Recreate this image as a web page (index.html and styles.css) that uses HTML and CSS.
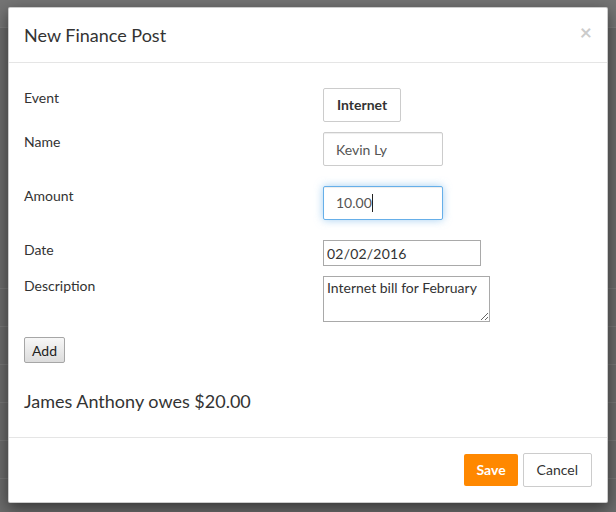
FILE: index.html
```html
<!DOCTYPE html>
<html>
<head>
<meta charset="utf-8">
<title>New Finance Post</title>
<link rel="stylesheet" href="styles.css">
</head>
<body>
<div class="page">
  <div class="topbar"></div>
  <div class="table">
    <div class="trow tall"></div>
    <div class="trow"></div>
    <div class="trow"></div>
    <div class="trow"></div>
    <div class="trow"></div>
    <div class="trow"></div>
  </div>
</div>

<div class="modal">
  <div class="modal-header">
    <button class="close" type="button">&times;</button>
    <h4 class="modal-title">New Finance Post</h4>
  </div>
  <div class="modal-body">
    <form class="form">
      <div class="form-row gap10">
        <label class="label">Event</label>
        <div class="control"><button type="button" class="btn btn-default btn-bold">Internet</button></div>
      </div>
      <div class="form-row gap20">
        <label class="label">Name</label>
        <div class="control"><input class="text-input" type="text" value="Kevin Ly"></div>
      </div>
      <div class="form-row gap20">
        <label class="label">Amount</label>
        <div class="control"><div class="text-input focused">10.00<span class="caret"></span></div></div>
      </div>
      <div class="form-row gap10">
        <label class="label">Date</label>
        <div class="control"><input class="date-input" type="text" value="02/02/2016"></div>
      </div>
      <div class="form-row gap15">
        <label class="label">Description</label>
        <div class="control"><textarea class="textarea">Internet bill for February</textarea></div>
      </div>
      <div class="add-row">
        <button type="button" class="native-btn">Add</button>
      </div>
    </form>
    <h4 class="owes">James Anthony owes $20.00</h4>
  </div>
  <div class="modal-footer">
    <button type="button" class="btn btn-save">Save</button>
    <button type="button" class="btn btn-default btn-wide">Cancel</button>
  </div>
</div>
</body>
</html>
```

FILE: styles.css
```css
html, body {
  margin: 0;
  padding: 0;
}

body {
  width: 616px;
  height: 512px;
  overflow: hidden;
  position: relative;
  background: #6b6b6b;
  font-family: Lato, "Helvetica Neue", Arial, sans-serif;
  font-size: 14px;
  line-height: 1.42857;
  color: #333;
}

/* dimmed page underneath */
.page {
  width: 100%;
  height: 100%;
}

.topbar {
  height: 27px;
  background: #747474;
  border-bottom: 1px solid #7c7c7c;
}

.table {
  padding-top: 260px;
}

.trow {
  height: 37px;
  border-top: 1px solid #777;
}

/* modal */
.modal {
  position: absolute;
  left: 8px;
  top: 7px;
  width: 600px;
  box-sizing: border-box;
  background: #fff;
  border: 1px solid rgba(0, 0, 0, 0.2);
  border-radius: 2px;
  box-shadow: 0 5px 15px rgba(0, 0, 0, 0.5);
}

.modal-header {
  padding: 15px;
  border-bottom: 1px solid #e5e5e5;
}

.modal-title {
  margin: 0;
  font-size: 18px;
  font-weight: 400;
  line-height: 24px;
  color: #333;
}

.close {
  float: right;
  margin-top: -2px;
  padding: 0;
  border: 0;
  background: transparent;
  font-family: inherit;
  font-size: 21px;
  font-weight: 700;
  line-height: 1;
  color: #000;
  opacity: 0.2;
  cursor: pointer;
}

.modal-body {
  padding: 25px 15px 10px;
}

.form {
  margin: 0;
}

.form-row {
  display: grid;
  grid-template-columns: 299px 1fr;
  align-items: start;
}

.gap10 { margin-bottom: 10px; }
.gap15 { margin-bottom: 15px; }
.gap20 { margin-bottom: 20px; }

.label {
  display: block;
  font-weight: 400;
  line-height: 20px;
  color: #333;
}

.control {
  display: flex;
}

.btn {
  display: inline-block;
  box-sizing: border-box;
  height: 34px;
  padding: 6px 12px;
  font-family: inherit;
  font-size: 14px;
  line-height: 20px;
  border: 1px solid transparent;
  border-radius: 2px;
  vertical-align: middle;
  cursor: pointer;
}

.btn-default {
  background: #fff;
  border-color: #ccc;
  color: #333;
}

.btn-bold {
  font-weight: 700;
  padding: 6px 13px;
}

.btn-wide {
  padding: 6px 13px;
}

.btn-save {
  height: 32px;
  background: #ff8800;
  border: 0;
  color: #fff;
  font-weight: 700;
}

.text-input {
  box-sizing: border-box;
  width: 120px;
  height: 34px;
  padding: 6px 12px;
  font-family: inherit;
  font-size: 14px;
  line-height: 20px;
  color: #555;
  background: #fff;
  border: 1px solid #ccc;
  border-radius: 2px;
  box-shadow: inset 0 1px 1px rgba(0, 0, 0, 0.075);
  outline: none;
}

.text-input.focused {
  border-color: #66afe9;
  box-shadow: inset 0 1px 1px rgba(0, 0, 0, 0.075), 0 0 8px rgba(102, 175, 233, 0.6);
}

.caret {
  display: inline-block;
  width: 1px;
  height: 18px;
  background: #222;
  vertical-align: -4px;
}

.date-input {
  box-sizing: border-box;
  width: 158px;
  height: 26px;
  padding: 1px 3px;
  font-family: inherit;
  font-size: 14px;
  color: #333;
  border: 1px solid #a9a9a9;
  border-radius: 0;
  background: #fff;
  outline: none;
  letter-spacing: 0.2px;
}

.textarea {
  box-sizing: border-box;
  width: 167px;
  height: 46px;
  padding: 2px 3px;
  font-family: inherit;
  font-size: 14px;
  line-height: 18px;
  color: #333;
  border: 1px solid #a9a9a9;
  border-radius: 0;
  outline: none;
}

.add-row {
  height: 26px;
}

.native-btn {
  box-sizing: border-box;
  height: 26px;
  width: 41px;
  padding: 0;
  font-family: inherit;
  font-size: 14px;
  color: #222;
  background: linear-gradient(#f7f7f7, #dcdcdc);
  border: 1px solid #a6a6a6;
  border-radius: 2px;
}

.owes {
  margin: 29px 0 15px;
  font-size: 18px;
  font-weight: 400;
  line-height: 1.1;
  color: #333;
}

.modal-footer {
  padding: 15px;
  text-align: right;
  border-top: 1px solid #e5e5e5;
  font-size: 0;
  line-height: 34px;
}

.modal-footer .btn + .btn {
  margin-left: 5px;
}
```
